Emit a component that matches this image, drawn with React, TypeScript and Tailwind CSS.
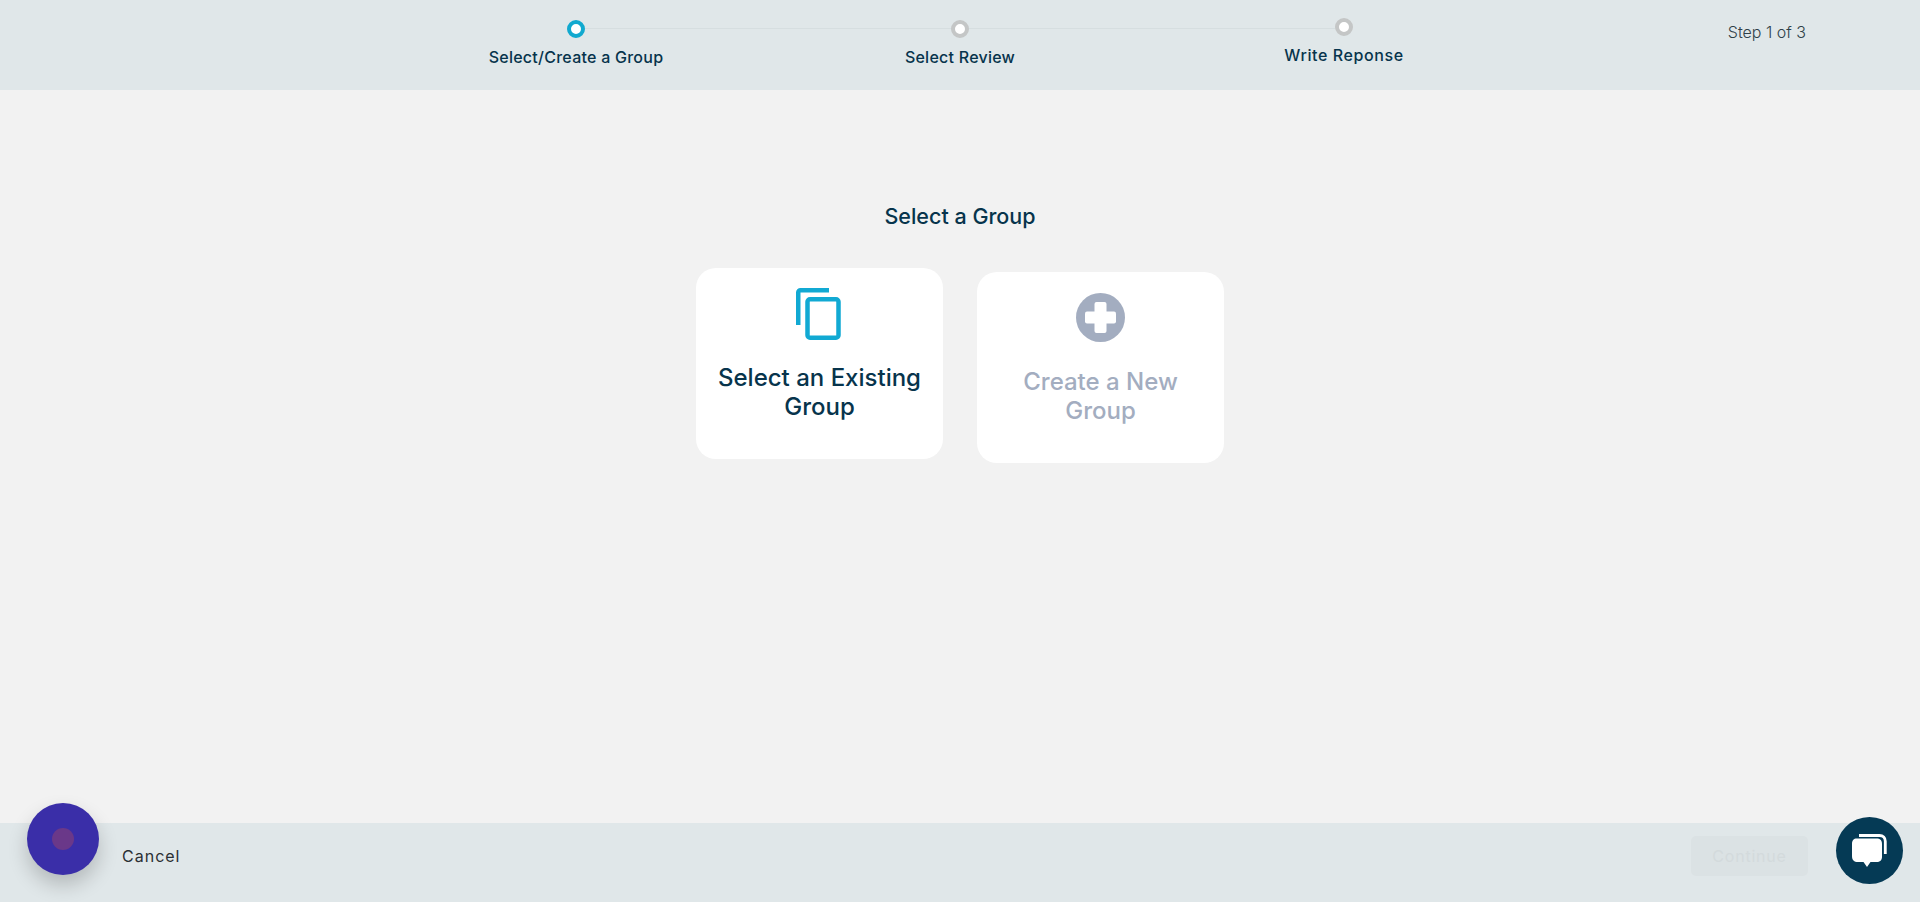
function Step({ label, active, up }: { label: string; active?: boolean; up?: boolean }) {
  return (
    <div className={up ? "flex flex-col items-center pt-[18px]" : "flex flex-col items-center pt-5"}>
      <div className={`h-[18px] w-[18px] rounded-full border-4 bg-white ${active ? "border-[#11a9cf]" : "border-[#c4c6c6]"}`} />
      <div className={`mt-[10px] text-[16px] leading-[18px] font-medium text-[#07344c] ${up ? "tracking-[0.6px]" : "tracking-[0.25px]"}`}>{label}</div>
    </div>
  );
}

function CopyIcon() {
  return (
    <svg className="mr-[3px]" width="45" height="52" viewBox="0 0 45 52" fill="none" stroke="#11a9d3" strokeWidth="4.5">
      <path d="M33 2.25H4.500a2.250 2.250 0 0 0-2.250 2.250V37" />
      <rect x="11.500" y="11.250" width="31" height="38.500" rx="2.500" />
    </svg>
  );
}

function PlusIcon() {
  return (
    <svg width="49" height="49" viewBox="0 0 49 49">
      <circle cx="24.500" cy="24.500" r="24.500" fill="#a3adc0" />
      <rect x="18.500" y="9" width="12" height="31" rx="2" fill="#fff" />
      <rect x="9" y="18.500" width="31" height="12" rx="2" fill="#fff" />
    </svg>
  );
}

function ChatIcon() {
  return (
    <svg width="35" height="34" viewBox="0 0 35 34">
      <path d="M7 1.500H27.500c3.500 0 5.800 2.200 5.800 5.800V20" fill="none" stroke="#fff" strokeWidth="2.800" strokeLinecap="butt" />
      <path d="M5 4.500h19.500c3.500 0 5.500 1.500 5.500 5.500v13c0 3-2 5-5.500 5H18.500L15 33l-3.500-5H6c-4 0-6-2-6-6V10c0-3.500 1.500-5.500 5-5.500z" fill="#fff" />
    </svg>
  );
}

export default function App() {
  return (
    <div className="relative flex h-screen flex-col bg-[#f2f2f2] font-['Inter',sans-serif] text-[#07344c]">
      <header className="flex h-[90px] shrink-0 bg-[#e0e7e9]">
        <div className="w-[384px]" />
        <div className="relative grid w-[1152px] grid-cols-3">
          <div className="absolute top-[28px] right-[192px] left-[192px] h-px bg-[#d6dee0]" />
          <div className="relative"><Step label="Select/Create a Group" active /></div>
          <div className="relative"><Step label="Select Review" /></div>
          <div className="relative"><Step label="Write Reponse" up /></div>
        </div>
        <div className="flex w-[384px] justify-end pt-[22px] pr-[114px] text-[16px] leading-[20px] font-light text-[#2f3f48]">Step 1 of 3</div>
      </header>

      <main className="flex flex-1 flex-col items-center pt-[114px]">
        <h1 className="text-[21.500px] leading-[25px] font-medium">Select a Group</h1>
        <div className="mt-[39px] flex items-start gap-[34px]">
          <div className="flex h-[191px] w-[247px] flex-col items-center rounded-[20px] bg-white px-3 pt-5">
            <CopyIcon />
            <div className="mt-[23px] text-center text-[24px] leading-[29px] font-medium text-[#07344c]">Select an Existing Group</div>
          </div>
          <div className="mt-1 flex h-[191px] w-[247px] flex-col items-center rounded-[20px] bg-white px-3 pt-[21px]">
            <PlusIcon />
            <div className="mt-[25px] text-center text-[24px] leading-[29px] font-medium text-[#a3adc0]">Create a New<br />Group</div>
          </div>
        </div>
      </main>

      <footer className="flex h-[79px] shrink-0 items-center justify-between bg-[#e0e7e9] pr-[112px] pb-[13px] pl-[122px]">
        <button className="text-[16px] leading-5 tracking-[1px] text-[#2b2f33]">Cancel</button>
        <button className="h-10 w-[117px] rounded-[5px] bg-[#dbe2e4] text-[16px] tracking-[0.800px] text-[#d3dadc]">Continue</button>
      </footer>

      <div className="absolute top-[803px] left-[27px] flex h-[72px] w-[72px] items-center justify-center rounded-full bg-[#3a2ea8] shadow-[0_10px_20px_rgba(0,0,0,0.2)]">
        <div className="h-[22px] w-[22px] rounded-full bg-[#6a3889]" />
      </div>
      <div className="absolute top-[817px] left-[1836px] flex h-[67px] w-[67px] items-center justify-center rounded-full bg-[#053a55]">
        <ChatIcon />
      </div>
    </div>
  );
}
